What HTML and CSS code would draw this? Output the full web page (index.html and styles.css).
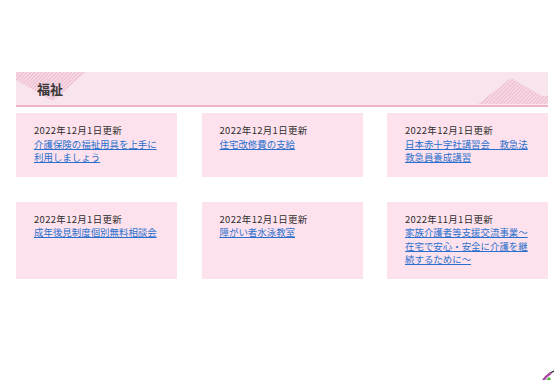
FILE: index.html
```html
<!DOCTYPE html>
<html lang="ja">
<head>
<meta charset="utf-8">
<title>福祉</title>
<link rel="stylesheet" href="styles.css">
</head>
<body>
<main class="page">
  <section class="welfare">
    <header class="band">
      <svg class="decor decor-left" width="70" height="30" viewBox="0 0 70 30" aria-hidden="true">
        <defs>
          <pattern id="hatch1" width="2.6" height="2.6" patternUnits="userSpaceOnUse" patternTransform="rotate(45)">
            <rect width="2.6" height="2.6" fill="#f6dce7"/>
            <rect width="1" height="2.6" fill="#efb8cc"/>
          </pattern>
        </defs>
        <polygon points="0,0 70,0 37,29 0,8" fill="url(#hatch1)"/>
      </svg>
      <h2 class="band-title">福祉</h2>
      <svg class="decor decor-right" width="70" height="28" viewBox="0 0 70 28" aria-hidden="true">
        <defs>
          <pattern id="hatch2" width="2.6" height="2.6" patternUnits="userSpaceOnUse" patternTransform="rotate(45)">
            <rect width="2.6" height="2.6" fill="#f6dce7"/>
            <rect width="1" height="2.6" fill="#efb8cc"/>
          </pattern>
        </defs>
        <polygon points="0,27 33,1 64,19 70,19 70,27" fill="url(#hatch2)"/>
      </svg>
    </header>
    <div class="cards">
      <article class="card">
        <p class="date">2022年12月1日更新</p>
        <a class="link" href="#">介護保険の福祉用具を上手に利用しましょう</a>
      </article>
      <article class="card">
        <p class="date">2022年12月1日更新</p>
        <a class="link" href="#">住宅改修費の支給</a>
      </article>
      <article class="card">
        <p class="date">2022年12月1日更新</p>
        <a class="link" href="#">日本赤十字社講習会　救急法救急員養成講習</a>
      </article>
      <article class="card">
        <p class="date">2022年12月1日更新</p>
        <a class="link" href="#">成年後見制度個別無料相談会</a>
      </article>
      <article class="card">
        <p class="date">2022年12月1日更新</p>
        <a class="link" href="#">障がい者水泳教室</a>
      </article>
      <article class="card">
        <p class="date">2022年11月1日更新</p>
        <a class="link" href="#">家族介護者等支援交流事業～在宅で安心・安全に介護を継続するために～</a>
      </article>
    </div>
  </section>
</main>
<svg class="pagetop" width="16" height="14" viewBox="0 0 16 14" aria-hidden="true">
  <circle cx="26" cy="28" r="25" fill="#ffffff" stroke="#333" stroke-width="1.4"/>
  <path d="M3 19 A25 25 0 0 1 13 7" fill="none" stroke="#b04aa8" stroke-width="2.4"/>
  <path d="M6 22 A22 22 0 0 1 12 12" fill="none" stroke="#4cb83a" stroke-width="3"/>
</svg>
</body>
</html>
```
FILE: styles.css
```css
html, body {
  margin: 0;
  padding: 0;
  background: #ffffff;
}
body {
  font-family: "Noto Sans CJK JP", "Noto Sans", sans-serif;
  color: #333333;
  width: 554px;
  height: 380px;
  overflow: hidden;
}
.page {
  padding: 72px 6px 0 16px;
}
.band {
  position: relative;
  height: 33px;
  background: #f7e4ec;
  border-bottom: 2px solid #f2b3c9;
  display: flex;
  align-items: center;
  padding-left: 21px;
  overflow: hidden;
}
.decor {
  position: absolute;
  display: block;
}
.decor-left {
  left: 0;
  top: 0;
}
.decor-right {
  right: 0;
  bottom: 0;
}
.band-title {
  position: relative;
  margin: 0;
  font-size: 13px;
  font-weight: 700;
  line-height: 1;
  color: #3a3a3a;
}
.cards {
  margin-top: 6px;
  display: grid;
  grid-template-columns: repeat(3, 161px);
  column-gap: 24.5px;
  row-gap: 25px;
}
.card {
  background: #fde2ed;
  padding: 11px 18px 12px 18px;
  font-size: 9.45px;
  line-height: 13.5px;
}
.date {
  margin: 0;
  color: #2e2e2e;
  letter-spacing: 0.35px;
}
.link {
  color: #2a6fcc;
  text-decoration: underline;
  text-underline-offset: 1px;
}
.pagetop {
  position: fixed;
  right: 0;
  bottom: 0;
}
```
